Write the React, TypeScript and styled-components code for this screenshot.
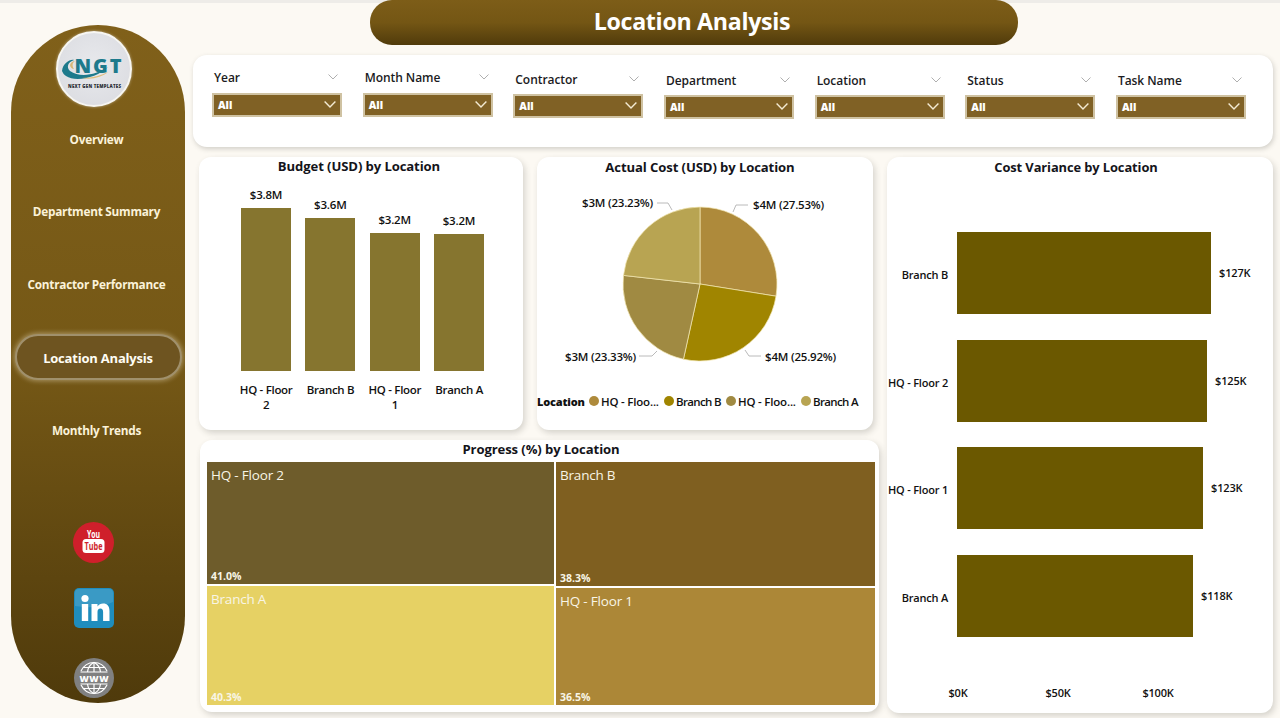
import React from "react";
import styled, { createGlobalStyle } from "styled-components";

const FONT = `"Open Sans", "Noto Sans", "Liberation Sans", sans-serif`;

const Global = createGlobalStyle`
  * { box-sizing: border-box; }
  html, body { margin: 0; padding: 0; overflow: hidden; }
  body { font-family: ${FONT}; color: #15151a; }
`;

const Page = styled.div`
  width: 1280px;
  height: 718px;
  display: flex;
  align-items: flex-start;
  overflow: hidden;
  background: linear-gradient(#eeece8 0 3px, #fcf9f3 3px);
`;

const Sidebar = styled.aside`
  width: 174px;
  height: 678px;
  margin: 25px 0 0 11px;
  padding-top: 6px;
  border-radius: 87px;
  background: linear-gradient(#80601a 0%, #755816 50%, #4f3a0b 100%);
  display: flex;
  flex-direction: column;
  align-items: center;
  flex-shrink: 0;
`;

const LogoBadge = styled.div`
  width: 76px;
  height: 76px;
  margin-left: -8px;
  border-radius: 50%;
  background: radial-gradient(circle at 50% 45%, #e8e9ec 0%, #dcdde2 80%);
  border: 2px solid #f7f6f2;
  box-shadow: 0 0 3px rgba(255, 255, 255, 0.5);
  overflow: hidden;
  flex-shrink: 0;
`;

const Nav = styled.nav`
  width: 100%;
  margin-top: 9px;
  display: flex;
  flex-direction: column;
  gap: 26.75px;
  align-items: center;
`;

const NavItem = styled.div<{ $active?: boolean }>`
  width: ${(p) => (p.$active ? "167px" : "166px")};
  height: 46px;
  margin-left: ${(p) => (p.$active ? "0" : "-3px")};
  padding-top: ${(p) => (p.$active ? "1px" : "0")};
  padding-bottom: ${(p) => (p.$active ? "0" : "1px")};
  display: flex;
  align-items: center;
  justify-content: center;
  font-size: ${(p) => (p.$active ? "13px" : "11.8px")};
  font-weight: 700;
  letter-spacing: ${(p) => (p.$active ? "-0.2px" : "-0.25px")};
  white-space: nowrap;
  color: ${(p) => (p.$active ? "#fffdf4" : "#fbf2d9")};
  border-radius: 23px;
  background: ${(p) => (p.$active ? "#6e5420" : "transparent")};
  border: ${(p) => (p.$active ? "2px solid #a0906c" : "2px solid transparent")};
  box-shadow: ${(p) => (p.$active ? "0 0 5px 1px rgba(255, 245, 220, 0.4)" : "none")};
`;

const Social = styled.div`
  margin: 69px 0 0 -9px;
  display: flex;
  flex-direction: column;
  align-items: center;
`;

const SocialIcon = styled.svg<{ $gap?: number }>`
  display: block;
  margin-top: ${(p) => p.$gap ?? 0}px;
`;

const Main = styled.main`
  width: 1080px;
  margin-left: 8px;
  display: flex;
  flex-direction: column;
`;

const TitleBar = styled.h1`
  width: 648px;
  height: 45px;
  margin: 0 0 0 177px;
  padding: 0 4px 3px 0;
  border-radius: 22px;
  background: linear-gradient(#7d5d18 0%, #745614 50%, #503b0b 100%);
  color: #fff;
  font-size: 23.2px;
  font-weight: 700;
  letter-spacing: -0.3px;
  display: flex;
  align-items: center;
  justify-content: center;
`;

const FilterPanel = styled.section`
  height: 92px;
  margin-top: 10px;
  padding: 14px 0 0 19px;
  border-radius: 14px;
  background: #fff;
  box-shadow: 1px 2px 5px rgba(60, 60, 50, 0.22);
  display: flex;
  gap: 20.67px;
`;

const Slicer = styled.div<{ $offset: number }>`
  width: 130px;
  padding-top: ${(p) => p.$offset}px;
`;

const SlicerHead = styled.div`
  height: 16px;
  padding: 0 4px 0 2px;
  display: flex;
  align-items: center;
  justify-content: space-between;
  font-size: 12px;
  font-weight: 600;
  letter-spacing: -0.05px;
  color: #1b1b22;
`;

const SlicerBox = styled.div<{ $gap: number }>`
  height: 24px;
  margin-top: ${(p) => p.$gap}px;
  padding: 0 4px 0 4px;
  background: #806125;
  border: 2px solid #cfc2a2;
  display: flex;
  align-items: center;
  justify-content: space-between;
  color: #fff;
  font-size: 10.5px;
  font-weight: 800;
`;

const Chevron = styled.svg`
  display: block;
  flex-shrink: 0;
`;

const Content = styled.div`
  margin-top: 10px;
  display: flex;
  align-items: flex-start;
`;

const LeftColumn = styled.div`
  width: 680px;
  margin-left: 6px;
  display: flex;
  flex-direction: column;
`;

const TopRow = styled.div`
  display: flex;
  gap: 14px;
`;

const Card = styled.section<{ $w: number; $h: number }>`
  width: ${(p) => p.$w}px;
  height: ${(p) => p.$h}px;
  border-radius: 12px;
  background: #fff;
  box-shadow: 2px 3px 6px rgba(60, 60, 50, 0.2);
  flex-shrink: 0;
`;

const CardTitle = styled.h2<{ $top?: number; $right?: number; $left?: number; $size?: number }>`
  margin: 0;
  padding: ${(p) => p.$top ?? 0}px ${(p) => p.$right ?? 0}px 0 ${(p) => p.$left ?? 0}px;
  font-size: ${(p) => p.$size ?? 13.1}px;
  line-height: 18px;
  font-weight: 700;
  letter-spacing: -0.1px;
  text-align: center;
  color: #14141a;
`;

const ColumnPlot = styled.div`
  height: 196px;
  margin-left: 42px;
  display: flex;
  align-items: flex-end;
  gap: 14.33px;
`;

const ColumnWrap = styled.div`
  width: 50px;
  display: flex;
  flex-direction: column;
  align-items: center;
`;

const ValueLabel = styled.span`
  font-size: 11.5px;
  line-height: 14px;
  font-weight: 600;
  white-space: nowrap;
  letter-spacing: -0.2px;
  color: #111;
`;

const ColumnBar = styled.div<{ $h: number }>`
  width: 50px;
  height: ${(p) => p.$h}px;
  margin-top: 6px;
  background: #86752f;
`;

const CategoryRow = styled.div`
  margin: 12px 0 0 35px;
  display: flex;
`;

const Category = styled.div`
  width: 64.33px;
  font-size: 11.5px;
  line-height: 14.5px;
  font-weight: 600;
  letter-spacing: -0.3px;
  text-align: center;
  white-space: pre-line;
  color: #111;
`;

const PieSvg = styled.svg`
  display: block;
`;

const PieText = styled.text`
  font-family: ${FONT};
  font-size: 11.5px;
  font-weight: 600;
  letter-spacing: -0.2px;
  fill: #111;
`;

const Legend = styled.div`
  height: 18px;
  display: flex;
  align-items: center;
  font-size: 11.5px;
  font-weight: 600;
  letter-spacing: -0.2px;
  white-space: nowrap;
  color: #111;
`;

const LegendTitle = styled.span`
  font-weight: 800;
  width: 52px;
  font-size: 11px;
`;

const LegendItem = styled.span<{ $w: number; $tight?: boolean }>`
  width: ${(p) => p.$w}px;
  display: flex;
  align-items: center;
  gap: 2px;
  letter-spacing: ${(p) => (p.$tight ? "-0.65px" : "-0.2px")};
`;

const LegendDot = styled.span<{ $c: string }>`
  width: 10px;
  height: 10px;
  border-radius: 50%;
  background: ${(p) => p.$c};
  flex-shrink: 0;
`;

const TreeCard = styled(Card)`
  margin: 10px 0 0 1px;
`;

const Tree = styled.div`
  margin: 4px 0 0 7px;
  width: 668px;
  display: flex;
  gap: 2px;
`;

const TreeColumn = styled.div<{ $w: number }>`
  width: ${(p) => p.$w}px;
  display: flex;
  flex-direction: column;
  gap: 2px;
`;

const TreeCell = styled.div<{ $h: number; $bg: string }>`
  height: ${(p) => p.$h}px;
  padding: 4px 4px 2px;
  background: ${(p) => p.$bg};
  color: #f8f5e6;
  display: flex;
  flex-direction: column;
  justify-content: space-between;
`;

const TreeName = styled.span`
  font-size: 13.5px;
  line-height: 18px;
  letter-spacing: -0.2px;
`;

const TreePct = styled.span`
  font-size: 10.5px;
  line-height: 12px;
  font-weight: 700;
`;

const VarianceCard = styled(Card)`
  margin-left: 8px;
`;

const HBars = styled.div`
  margin-top: 56px;
  display: flex;
  flex-direction: column;
  gap: 25.5px;
`;

const HRow = styled.div`
  height: 82px;
  display: flex;
  align-items: center;
`;

const HLabel = styled.span`
  width: 70px;
  padding: 3px 9px 0 0;
  text-align: right;
  font-size: 11px;
  font-weight: 600;
  letter-spacing: -0.2px;
  white-space: nowrap;
  color: #111;
`;

const HBar = styled.div<{ $w: number }>`
  width: ${(p) => p.$w}px;
  height: 82px;
  background: #6b5800;
`;

const HValue = styled.span`
  margin-left: 8px;
  padding-bottom: 1px;
  font-size: 11px;
  font-weight: 600;
  letter-spacing: -0.15px;
  color: #111;
`;

const Axis = styled.div`
  margin-top: 49px;
  padding-left: 21px;
  display: flex;
`;

const AxisLabel = styled.span`
  width: 100px;
  text-align: center;
  font-size: 11px;
  line-height: 14px;
  font-weight: 600;
  letter-spacing: -0.2px;
  color: #111;
`;

const filters = [
  { name: "Year", off: 0, gap: 8 },
  { name: "Month Name", off: 0, gap: 8 },
  { name: "Contractor", off: 2, gap: 7 },
  { name: "Department", off: 3, gap: 7 },
  { name: "Location", off: 3, gap: 7 },
  { name: "Status", off: 3, gap: 7 },
  { name: "Task Name", off: 3, gap: 7 },
];

const navItems = ["Overview", "Department Summary", "Contractor Performance", "Location Analysis", "Monthly Trends"];

const columns = [
  { label: "HQ - Floor\n2", value: "$3.8M", h: 163 },
  { label: "Branch B", value: "$3.6M", h: 153 },
  { label: "HQ - Floor\n1", value: "$3.2M", h: 138 },
  { label: "Branch A", value: "$3.2M", h: 137 },
];

const slices = [
  { pct: 27.53, color: "#ae8a3b" },
  { pct: 25.92, color: "#a08500" },
  { pct: 23.33, color: "#a08a42" },
  { pct: 23.22, color: "#b8a452" },
];

const hbars = [
  { label: "Branch B", w: 254, value: "$127K" },
  { label: "HQ - Floor 2", w: 250, value: "$125K" },
  { label: "HQ - Floor 1", w: 246, value: "$123K" },
  { label: "Branch A", w: 236, value: "$118K" },
];

const legend = [
  { label: "HQ - Floo...", c: "#ae8a3b", w: 75, tight: false },
  { label: "Branch B", c: "#a08500", w: 62, tight: true },
  { label: "HQ - Floo...", c: "#a08a42", w: 75, tight: false },
  { label: "Branch A", c: "#b8a452", w: 60, tight: true },
];

function pieSlices() {
  const cx = 163;
  const cy = 107;
  const r = 77;
  let acc = 0;
  return slices.map((s) => {
    const a0 = (acc / 100) * Math.PI * 2;
    acc += s.pct;
    const a1 = (acc / 100) * Math.PI * 2;
    const d = `M${cx} ${cy}L${cx + r * Math.sin(a0)} ${cy - r * Math.cos(a0)}A${r} ${r} 0 0 1 ${cx + r * Math.sin(a1)} ${cy - r * Math.cos(a1)}Z`;
    return <path key={s.color} d={d} fill={s.color} stroke="#f3e8b4" strokeWidth="0.7" />;
  });
}

const Caret = ({ w, c, sw }: { w: number; c: string; sw: number }) => (
  <Chevron width={w} height={w * 0.6} viewBox="0 0 10 6" fill="none">
    <path d="M0.5 0.5L5 5L9.5 0.5" stroke={c} strokeWidth={sw} />
  </Chevron>
);

const NgtLogo = () => (
  <svg width="72" height="72" viewBox="0 0 72 72">
    <text x="16.5" y="40" fontFamily={FONT} fontSize="20" fontWeight="800" fill="#1d7a8c" textLength="47" lengthAdjust="spacing">
      NGT
    </text>
    <path d="M4 38C5 30 12 26 16 27C10 29 8 34 12 38C22 45 38 42 50 34C40 44 18 50 8 43C6 42 5 40 4 38Z" fill="#1d7a8c" />
    <path d="M12 32C13 29 15 28 17 28C14 30 14 33 16 36C14 36 12 34 12 32Z" fill="#d9b877" />
    <path d="M24 45C34 45 44 42 50 39C44 44 34 47 24 45Z" fill="#dfbd7c" />
    <text x="10" y="55" fontFamily={FONT} fontSize="4.4" fontWeight="800" fill="#2a2d33" textLength="53" lengthAdjust="spacing">
      NEXT GEN TEMPLATES
    </text>
  </svg>
);

const YoutubeIcon = () => (
  <SocialIcon width="41" height="41" viewBox="0 0 41 41">
    <circle cx="20.5" cy="20.5" r="20.5" fill="#cf1f2b" />
    <text x="20.5" y="15.5" textAnchor="middle" fontFamily={FONT} fontSize="10" fontWeight="700" fill="#fff" textLength="13" lengthAdjust="spacingAndGlyphs">
      You
    </text>
    <rect x="9.5" y="17" width="22" height="14" rx="3.5" fill="#fff" />
    <text x="20.5" y="28" textAnchor="middle" fontFamily={FONT} fontSize="10.5" fontWeight="700" fill="#cf1f2b" textLength="18" lengthAdjust="spacingAndGlyphs">
      Tube
    </text>
  </SocialIcon>
);

const LinkedinIcon = () => (
  <SocialIcon $gap={25} width="40" height="40" viewBox="0 0 40 40">
    <rect width="40" height="40" rx="5" fill="#1f8dbd" />
    <path d="M1 5a4 4 0 0 1 4-4h30a4 4 0 0 1 4 4v9C26 20 13 20 1 18Z" fill="#fff" opacity="0.12" />
    <circle cx="11" cy="10.5" r="3.6" fill="#fff" />
    <rect x="7.8" y="16" width="6.4" height="17" fill="#fff" />
    <path d="M17.5 16h6v2.6c1.2-2 3.2-3 5.6-3 4.2 0 6.4 2.6 6.4 7.4V33h-6.4v-9c0-2.4-.8-3.6-2.7-3.6-2 0-2.9 1.4-2.9 3.6v9h-6Z" fill="#fff" />
  </SocialIcon>
);

const GlobeIcon = () => (
  <SocialIcon $gap={30} width="40" height="40" viewBox="0 0 40 40">
    <circle cx="20" cy="20" r="20" fill="#808080" />
    <g fill="none" stroke="#fff" strokeWidth="1.2">
      <path d="M7 13C10 7 15 4.5 20 4.5S30 7 33 13" />
      <path d="M7 27C10 33 15 35.5 20 35.5S30 33 33 27" />
      <path d="M20 4.5V14M20 26V35.5" />
      <path d="M13.5 14C14 10 16.5 6 20 4.5C23.5 6 26 10 26.5 14" />
      <path d="M13.5 26C14 30 16.5 34 20 35.5C23.5 34 26 30 26.5 26" />
      <path d="M9 9.5H31M6.5 14H33.5M6.5 26H33.5M9 30.5H31" />
    </g>
    <text x="20" y="23.5" textAnchor="middle" fontFamily={FONT} fontSize="9" fontWeight="800" fill="#fff" textLength="29" lengthAdjust="spacing">
      WWW
    </text>
  </SocialIcon>
);

export default function App() {
  return (
    <>
      <Global />
      <Page>
        <Sidebar>
          <LogoBadge>
            <NgtLogo />
          </LogoBadge>
          <Nav>
            {navItems.map((n) => (
              <NavItem key={n} $active={n === "Location Analysis"}>
                {n}
              </NavItem>
            ))}
          </Nav>
          <Social>
            <YoutubeIcon />
            <LinkedinIcon />
            <GlobeIcon />
          </Social>
        </Sidebar>
        <Main>
          <TitleBar>Location Analysis</TitleBar>
          <FilterPanel>
            {filters.map((f) => (
              <Slicer key={f.name} $offset={f.off}>
                <SlicerHead>
                  {f.name}
                  <Caret w={10} c="#9a9a9a" sw={0.8} />
                </SlicerHead>
                <SlicerBox $gap={f.gap}>
                  All
                  <Caret w={12} c="#f3ead2" sw={1.2} />
                </SlicerBox>
              </Slicer>
            ))}
          </FilterPanel>
          <Content>
            <LeftColumn>
              <TopRow>
                <Card $w={324} $h={273}>
                  <CardTitle $right={4}>Budget (USD) by Location</CardTitle>
                  <ColumnPlot>
                    {columns.map((c) => (
                      <ColumnWrap key={c.label}>
                        <ValueLabel>{c.value}</ValueLabel>
                        <ColumnBar $h={c.h} />
                      </ColumnWrap>
                    ))}
                  </ColumnPlot>
                  <CategoryRow>
                    {columns.map((c) => (
                      <Category key={c.label}>{c.label}</Category>
                    ))}
                  </CategoryRow>
                </Card>
                <Card $w={336} $h={273}>
                  <CardTitle $top={1} $right={10}>Actual Cost (USD) by Location</CardTitle>
                  <PieSvg width="336" height="216" viewBox="0 -1 336 216">
                    {pieSlices()}
                    <g fill="none" stroke="#a8a8a8" strokeWidth="0.8">
                      <path d="M196 35L199 28H211" />
                      <path d="M208 173L212 179H224" />
                      <path d="M120 174L115 179H102" />
                      <path d="M135 33L131 26H120" />
                    </g>
                    <PieText x="216" y="32">$4M (27.53%)</PieText>
                    <PieText x="228" y="184">$4M (25.92%)</PieText>
                    <PieText x="28" y="184">$3M (23.33%)</PieText>
                    <PieText x="45" y="30">$3M (23.23%)</PieText>
                  </PieSvg>
                  <Legend>
                    <LegendTitle>Location</LegendTitle>
                    {legend.map((l, i) => (
                      <LegendItem key={i} $w={l.w} $tight={l.tight}>
                        <LegendDot $c={l.c} />
                        {l.label}
                      </LegendItem>
                    ))}
                  </Legend>
                </Card>
              </TopRow>
              <TreeCard $w={679} $h={272}>
                <CardTitle $left={3}>Progress (%) by Location</CardTitle>
                <Tree>
                  <TreeColumn $w={347}>
                    <TreeCell $h={122} $bg="#6e5c2b">
                      <TreeName>HQ - Floor 2</TreeName>
                      <TreePct>41.0%</TreePct>
                    </TreeCell>
                    <TreeCell $h={119} $bg="#e6d164">
                      <TreeName>Branch A</TreeName>
                      <TreePct>40.3%</TreePct>
                    </TreeCell>
                  </TreeColumn>
                  <TreeColumn $w={319}>
                    <TreeCell $h={124} $bg="#7f5f20">
                      <TreeName>Branch B</TreeName>
                      <TreePct>38.3%</TreePct>
                    </TreeCell>
                    <TreeCell $h={117} $bg="#ac8737">
                      <TreeName>HQ - Floor 1</TreeName>
                      <TreePct>36.5%</TreePct>
                    </TreeCell>
                  </TreeColumn>
                </Tree>
              </TreeCard>
            </LeftColumn>
            <VarianceCard $w={386} $h={556}>
              <CardTitle $top={1} $right={8} $size={12.9}>Cost Variance by Location</CardTitle>
              <HBars>
                {hbars.map((b) => (
                  <HRow key={b.label}>
                    <HLabel>{b.label}</HLabel>
                    <HBar $w={b.w} />
                    <HValue>{b.value}</HValue>
                  </HRow>
                ))}
              </HBars>
              <Axis>
                <AxisLabel>$0K</AxisLabel>
                <AxisLabel>$50K</AxisLabel>
                <AxisLabel>$100K</AxisLabel>
              </Axis>
            </VarianceCard>
          </Content>
        </Main>
      </Page>
    </>
  );
}
